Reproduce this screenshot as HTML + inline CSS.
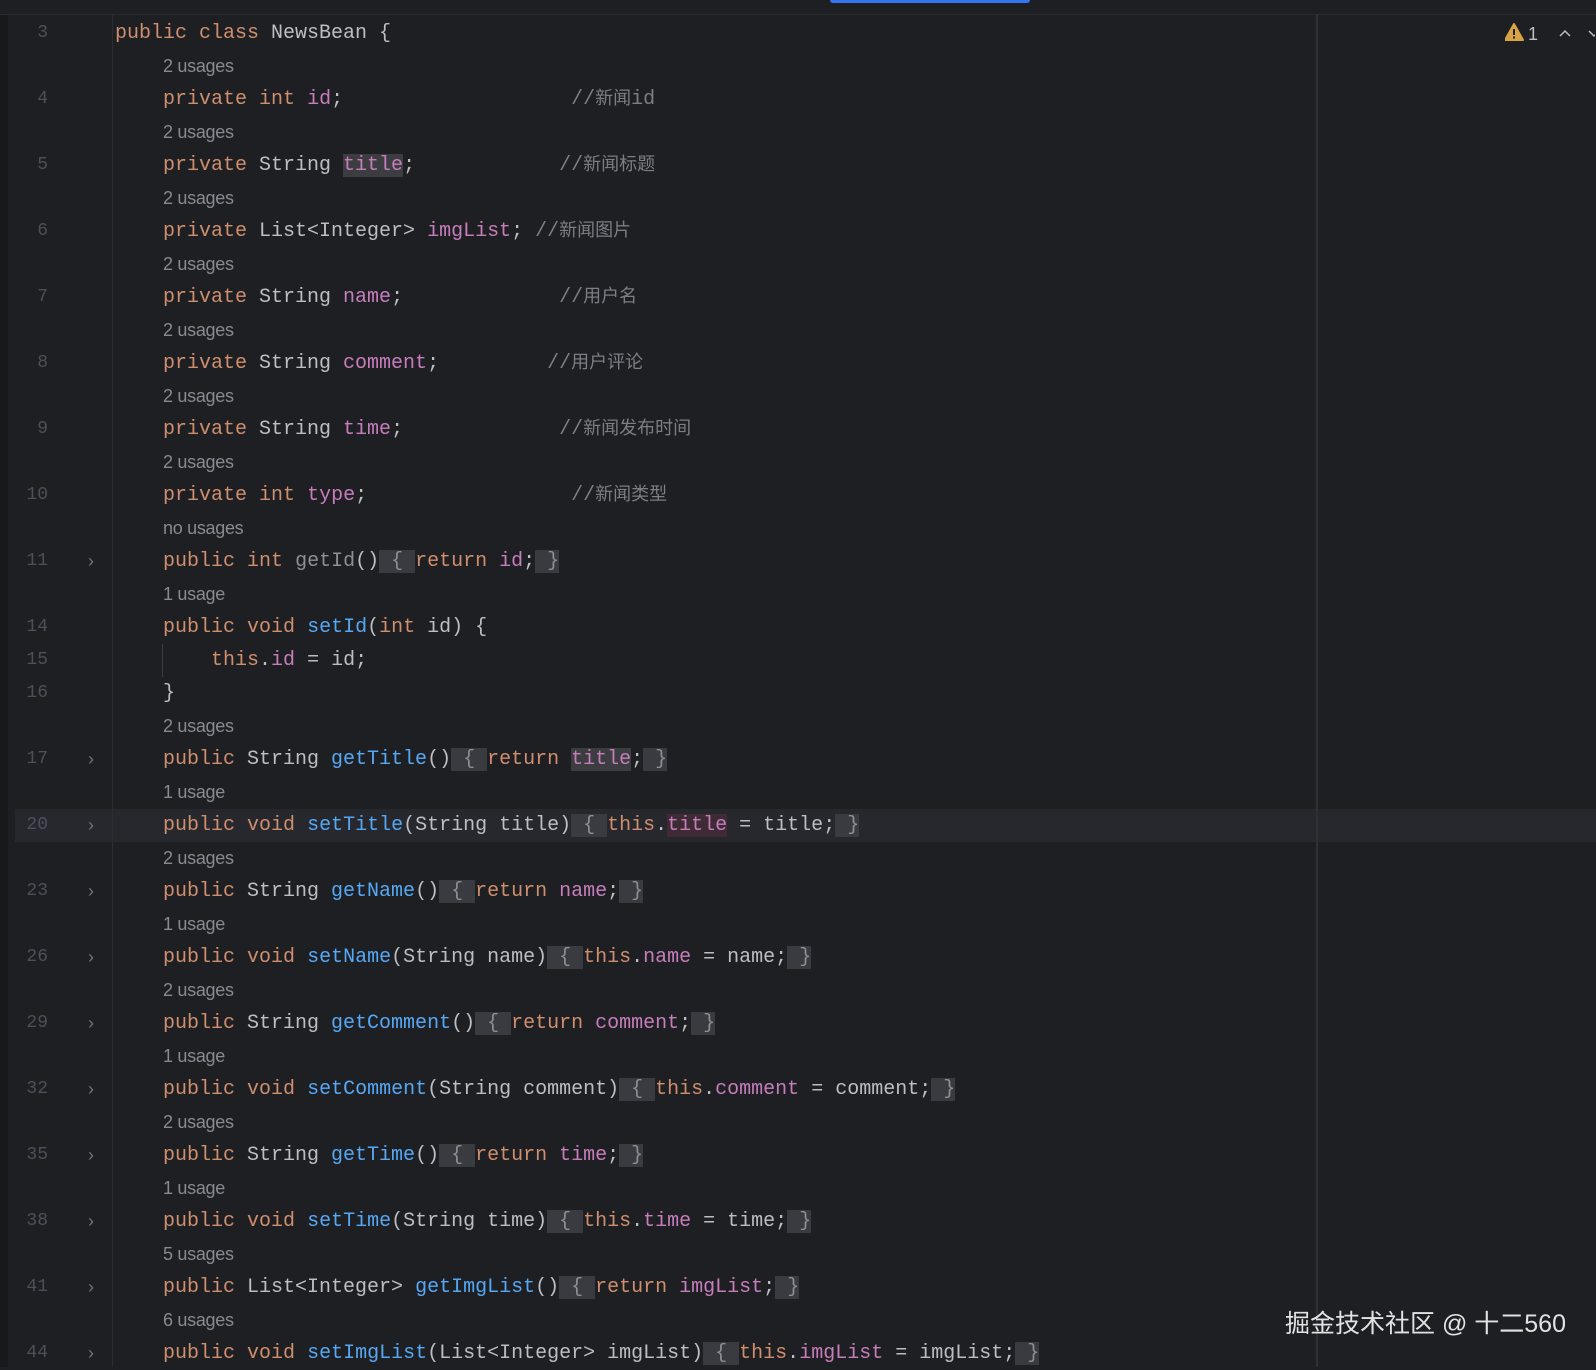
<!DOCTYPE html>
<html><head><meta charset="utf-8"><style>
body{margin:0;width:1596px;height:1367px;background:#1e1f22;overflow:hidden;position:relative;font-family:"Liberation Mono","Noto Sans CJK SC",monospace;}
.top{position:absolute;left:0;top:0;width:1596px;height:14px;background:#1e1f22;border-bottom:1px solid #2b2d30;}
.tab{position:absolute;left:830px;top:0;width:200px;height:3px;background:#3574f0;border-radius:0 0 3px 3px;}
.lstrip{position:absolute;left:0;top:0;width:8px;height:1367px;background:#18191b;}
.gsep{position:absolute;left:112px;top:15px;width:1px;height:1352px;background:#2b2d30;}
.vline{position:absolute;left:1316px;top:15px;width:2px;height:1352px;background:#2e3034;}
.row{position:absolute;left:0;height:33px;width:1596px;margin-top:2px;}
.num{position:absolute;left:0;width:48px;text-align:right;color:#4b5059;font-size:18px;line-height:33px;}
.chev{position:absolute;left:88px;top:0;line-height:33px;color:#6f737a;font-size:18px;font-family:"Liberation Sans",sans-serif;}
.code{position:absolute;left:115px;line-height:33px;font-size:20px;color:#bcbec4;white-space:pre;}
.us{position:absolute;left:163px;line-height:33px;font-size:18px;color:#868a91;font-family:"Liberation Sans",sans-serif;letter-spacing:-0.3px;}
.k{color:#cf8e6d}.f{color:#c77dbb}.m{color:#56a8f5}.c{color:#7a7e85}.g{color:#8c8f94}
.cj{font-size:18px}
.b{background:#393b40;color:#8c8f94}.h{background:#3b3d41}.hr{background:#3e2b35}
.cur{background:#26282e}
.wm{position:absolute;left:1285px;top:1304px;font-family:"Liberation Sans","Noto Sans CJK SC",sans-serif;font-size:25px;color:#e2e2e2;}
.warn{position:absolute;left:1505px;top:22px;}
</style></head><body>
<div class="lstrip"></div>
<div class="top"><div class="tab"></div></div>
<div class="row cur" style="top:807px;left:15px"></div>
<div class="gsep"></div>
<div class="vline"></div>
<div style="position:absolute;left:162px;top:644px;width:1px;height:33px;background:#3a3c40"></div>

<div class="row" style="top:15px"><div class="num">3</div><div class="code"><span class="k">public class</span> NewsBean {</div></div>
<div class="row" style="top:48px"><div class="us">2 usages</div></div>
<div class="row" style="top:81px"><div class="num">4</div><div class="code">    <span class="k">private int</span> <span class="f">id</span>;                   <span class="c">//<span class="cj">新闻</span>id</span></div></div>
<div class="row" style="top:114px"><div class="us">2 usages</div></div>
<div class="row" style="top:147px"><div class="num">5</div><div class="code">    <span class="k">private</span> String <span class="f h">title</span>;            <span class="c">//<span class="cj">新闻标题</span></span></div></div>
<div class="row" style="top:180px"><div class="us">2 usages</div></div>
<div class="row" style="top:213px"><div class="num">6</div><div class="code">    <span class="k">private</span> List&lt;Integer&gt; <span class="f">imgList</span>; <span class="c">//<span class="cj">新闻图片</span></span></div></div>
<div class="row" style="top:246px"><div class="us">2 usages</div></div>
<div class="row" style="top:279px"><div class="num">7</div><div class="code">    <span class="k">private</span> String <span class="f">name</span>;             <span class="c">//<span class="cj">用户名</span></span></div></div>
<div class="row" style="top:312px"><div class="us">2 usages</div></div>
<div class="row" style="top:345px"><div class="num">8</div><div class="code">    <span class="k">private</span> String <span class="f">comment</span>;         <span class="c">//<span class="cj">用户评论</span></span></div></div>
<div class="row" style="top:378px"><div class="us">2 usages</div></div>
<div class="row" style="top:411px"><div class="num">9</div><div class="code">    <span class="k">private</span> String <span class="f">time</span>;             <span class="c">//<span class="cj">新闻发布时间</span></span></div></div>
<div class="row" style="top:444px"><div class="us">2 usages</div></div>
<div class="row" style="top:477px"><div class="num">10</div><div class="code">    <span class="k">private int</span> <span class="f">type</span>;                 <span class="c">//<span class="cj">新闻类型</span></span></div></div>
<div class="row" style="top:510px"><div class="us">no usages</div></div>
<div class="row" style="top:543px"><div class="num">11</div><div class="chev">&#x203A;</div><div class="code">    <span class="k">public int</span> <span class="g">getId</span>()<span class="b"> { </span><span class="k">return</span> <span class="f">id</span>;<span class="b"> }</span></div></div>
<div class="row" style="top:576px"><div class="us">1 usage</div></div>
<div class="row" style="top:609px"><div class="num">14</div><div class="code">    <span class="k">public void</span> <span class="m">setId</span>(<span class="k">int</span> id) {</div></div>
<div class="row" style="top:642px"><div class="num">15</div><div class="code">        <span class="k">this</span>.<span class="f">id</span> = id;</div></div>
<div class="row" style="top:675px"><div class="num">16</div><div class="code">    }</div></div>
<div class="row" style="top:708px"><div class="us">2 usages</div></div>
<div class="row" style="top:741px"><div class="num">17</div><div class="chev">&#x203A;</div><div class="code">    <span class="k">public</span> String <span class="m">getTitle</span>()<span class="b"> { </span><span class="k">return</span> <span class="f h">title</span>;<span class="b"> }</span></div></div>
<div class="row" style="top:774px"><div class="us">1 usage</div></div>
<div class="row" style="top:807px"><div class="num">20</div><div class="chev">&#x203A;</div><div class="code">    <span class="k">public void</span> <span class="m">setTitle</span>(String title)<span class="b"> { </span><span class="k">this</span>.<span class="f hr">title</span> = title;<span class="b"> }</span></div></div>
<div class="row" style="top:840px"><div class="us">2 usages</div></div>
<div class="row" style="top:873px"><div class="num">23</div><div class="chev">&#x203A;</div><div class="code">    <span class="k">public</span> String <span class="m">getName</span>()<span class="b"> { </span><span class="k">return</span> <span class="f">name</span>;<span class="b"> }</span></div></div>
<div class="row" style="top:906px"><div class="us">1 usage</div></div>
<div class="row" style="top:939px"><div class="num">26</div><div class="chev">&#x203A;</div><div class="code">    <span class="k">public void</span> <span class="m">setName</span>(String name)<span class="b"> { </span><span class="k">this</span>.<span class="f">name</span> = name;<span class="b"> }</span></div></div>
<div class="row" style="top:972px"><div class="us">2 usages</div></div>
<div class="row" style="top:1005px"><div class="num">29</div><div class="chev">&#x203A;</div><div class="code">    <span class="k">public</span> String <span class="m">getComment</span>()<span class="b"> { </span><span class="k">return</span> <span class="f">comment</span>;<span class="b"> }</span></div></div>
<div class="row" style="top:1038px"><div class="us">1 usage</div></div>
<div class="row" style="top:1071px"><div class="num">32</div><div class="chev">&#x203A;</div><div class="code">    <span class="k">public void</span> <span class="m">setComment</span>(String comment)<span class="b"> { </span><span class="k">this</span>.<span class="f">comment</span> = comment;<span class="b"> }</span></div></div>
<div class="row" style="top:1104px"><div class="us">2 usages</div></div>
<div class="row" style="top:1137px"><div class="num">35</div><div class="chev">&#x203A;</div><div class="code">    <span class="k">public</span> String <span class="m">getTime</span>()<span class="b"> { </span><span class="k">return</span> <span class="f">time</span>;<span class="b"> }</span></div></div>
<div class="row" style="top:1170px"><div class="us">1 usage</div></div>
<div class="row" style="top:1203px"><div class="num">38</div><div class="chev">&#x203A;</div><div class="code">    <span class="k">public void</span> <span class="m">setTime</span>(String time)<span class="b"> { </span><span class="k">this</span>.<span class="f">time</span> = time;<span class="b"> }</span></div></div>
<div class="row" style="top:1236px"><div class="us">5 usages</div></div>
<div class="row" style="top:1269px"><div class="num">41</div><div class="chev">&#x203A;</div><div class="code">    <span class="k">public</span> List&lt;Integer&gt; <span class="m">getImgList</span>()<span class="b"> { </span><span class="k">return</span> <span class="f">imgList</span>;<span class="b"> }</span></div></div>
<div class="row" style="top:1302px"><div class="us">6 usages</div></div>
<div class="row" style="top:1335px"><div class="num">44</div><div class="chev">&#x203A;</div><div class="code">    <span class="k">public void</span> <span class="m">setImgList</span>(List&lt;Integer&gt; imgList)<span class="b"> { </span><span class="k">this</span>.<span class="f">imgList</span> = imgList;<span class="b"> }</span></div></div>

<svg class="warn" width="90" height="22" viewBox="0 0 90 22">
<path d="M9 2 L18 18 L0 18 Z" fill="#d9a343" stroke="#d9a343" stroke-width="2" stroke-linejoin="round"/>
<rect x="8" y="7" width="2" height="6" fill="#1e1f22"/><rect x="8" y="14.5" width="2" height="2" fill="#1e1f22"/>
<text x="23" y="18" font-family="Liberation Sans" font-size="18" fill="#bcbec4">1</text>
<path d="M55 14 L60 9 L65 14" fill="none" stroke="#bcbec4" stroke-width="1.5"/>
<path d="M84 9 L89 14 L94 9" fill="none" stroke="#bcbec4" stroke-width="1.5"/>
</svg>
<div class="wm">掘金技术社区 @ 十二560</div>
</body></html>
